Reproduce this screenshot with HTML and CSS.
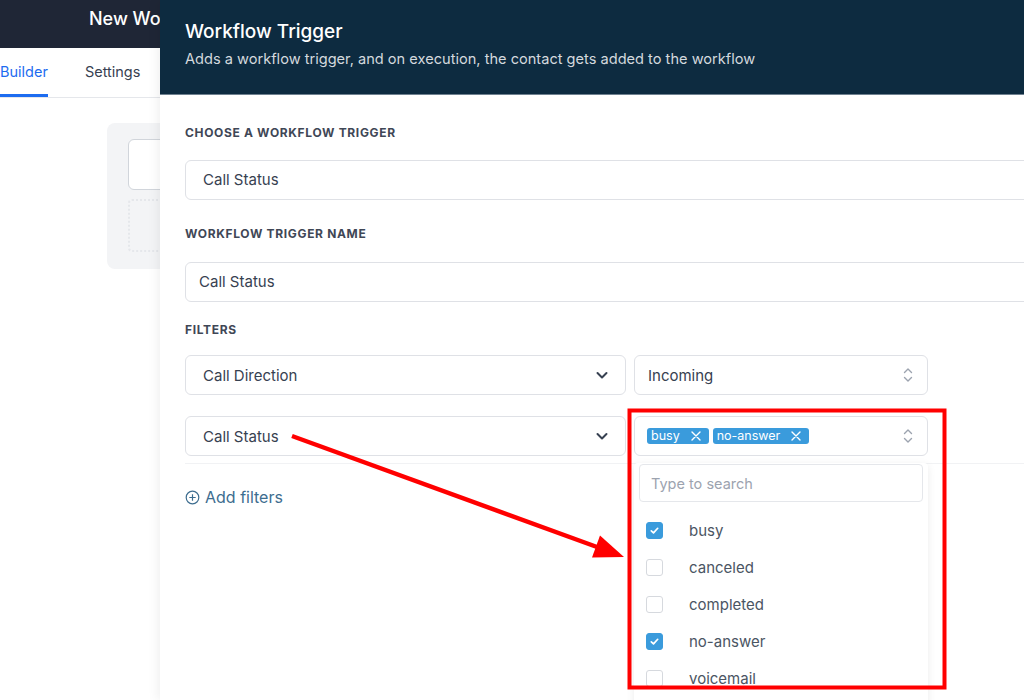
FILE: index.html
```html
<!DOCTYPE html>
<html>
<head>
<meta charset="utf-8">
<link rel="stylesheet" href="styles.css">
</head>
<body>
<div class="app">
  <div class="topbar"><div class="app-title-clip"><span class="app-title">New Workflow</span></div></div>
  <div class="tabs">
    <div class="tab active">Builder</div>
    <div class="tab">Settings</div>
  </div>
  <div class="canvas">
    <div class="canvas-card">
      <div class="node"></div>
      <div class="node-dashed"></div>
    </div>
  </div>
</div>

<div class="drawer">
  <div class="drawer-head">
    <div class="drawer-title">Workflow Trigger</div>
    <div class="drawer-sub">Adds a workflow trigger, and on execution, the contact gets added to the workflow</div>
  </div>
  <div class="drawer-body">
    <div class="label l1">CHOOSE A WORKFLOW TRIGGER</div>
    <div class="field select-field">Call Status</div>
    <div class="label l2">WORKFLOW TRIGGER NAME</div>
    <div class="field input-field">Call Status</div>
    <div class="label l3">FILTERS</div>
    <div class="filters">
      <div class="filter-row">
        <div class="sel sel-left"><span>Call Direction</span>
          <svg class="chev" width="14" height="14" viewBox="0 0 14 14"><path d="M2.5 5 L7 9.5 L11.5 5" fill="none" stroke="#374151" stroke-width="2" stroke-linecap="round" stroke-linejoin="round"/></svg>
        </div>
        <div class="sel sel-right"><span>Incoming</span>
          <svg class="updown" width="12" height="18" viewBox="0 0 12 18"><path d="M2.5 6.5 L6 3 L9.5 6.5 M2.5 11.5 L6 15 L9.5 11.5" fill="none" stroke="#9ca3af" stroke-width="1.4" stroke-linecap="round" stroke-linejoin="round"/></svg>
        </div>
      </div>
      <div class="filter-row">
        <div class="sel sel-left"><span>Call Status</span>
          <svg class="chev" width="14" height="14" viewBox="0 0 14 14"><path d="M2.5 5 L7 9.5 L11.5 5" fill="none" stroke="#374151" stroke-width="2" stroke-linecap="round" stroke-linejoin="round"/></svg>
        </div>
        <div class="multi-wrap">
          <div class="sel sel-right multi">
            <div class="tags">
              <span class="tag">busy<svg class="tag-x" width="10" height="10" viewBox="0 0 10 10"><path d="M1 1 L9 9 M9 1 L1 9" stroke="#fff" stroke-width="1.4" stroke-linecap="round"/></svg></span>
              <span class="tag">no-answer<svg class="tag-x" width="10" height="10" viewBox="0 0 10 10"><path d="M1 1 L9 9 M9 1 L1 9" stroke="#fff" stroke-width="1.4" stroke-linecap="round"/></svg></span>
            </div>
            <svg class="updown" width="12" height="18" viewBox="0 0 12 18"><path d="M2.5 6.5 L6 3 L9.5 6.5 M2.5 11.5 L6 15 L9.5 11.5" fill="none" stroke="#9ca3af" stroke-width="1.4" stroke-linecap="round" stroke-linejoin="round"/></svg>
          </div>
          <div class="dropdown">
            <div class="search">Type to search</div>
            <div class="opts">
              <div class="opt"><span class="cb on"><svg width="11" height="11" viewBox="0 0 11 11"><path d="M2.3 5.8 L4.5 7.9 L8.7 3.3" fill="none" stroke="#fff" stroke-width="1.7" stroke-linecap="round" stroke-linejoin="round"/></svg></span><span class="opt-label">busy</span></div>
              <div class="opt"><span class="cb"></span><span class="opt-label">canceled</span></div>
              <div class="opt"><span class="cb"></span><span class="opt-label">completed</span></div>
              <div class="opt"><span class="cb on"><svg width="11" height="11" viewBox="0 0 11 11"><path d="M2.3 5.8 L4.5 7.9 L8.7 3.3" fill="none" stroke="#fff" stroke-width="1.7" stroke-linecap="round" stroke-linejoin="round"/></svg></span><span class="opt-label">no-answer</span></div>
              <div class="opt"><span class="cb"></span><span class="opt-label">voicemail</span></div>
            </div>
          </div>
        </div>
      </div>
    </div>
    <div class="add-filters">
      <svg width="15" height="15" viewBox="0 0 15 15"><circle cx="7.5" cy="7.5" r="6.3" fill="none" stroke="#3d6d8f" stroke-width="1.2"/><path d="M7.5 4.3 V10.7 M4.3 7.5 H10.7" stroke="#3d6d8f" stroke-width="1.2"/></svg>
      <span>Add filters</span>
    </div>
  </div>
</div>

<svg class="annot" width="1024" height="700" viewBox="0 0 1024 700">
  <rect x="629.5" y="410.5" width="315" height="277" fill="none" stroke="#ff0000" stroke-width="4"/>
  <line x1="292" y1="436" x2="597" y2="547" stroke="#ff0000" stroke-width="4.5"/>
  <polygon points="624,557 592,557.5 600,535.5" fill="#ff0000"/>
</svg>
</body>
</html>
```

FILE: styles.css
```css
* { box-sizing: border-box; }
body {
  margin: 0;
  width: 1024px;
  height: 700px;
  overflow: hidden;
  position: relative;
  background: #ffffff;
  font-family: Inter, "Noto Sans", sans-serif;
  color: #374151;
}

/* background application */
.app { width: 1024px; height: 700px; }
.topbar {
  height: 48px;
  background: #1f2636;
  padding: 8px 0 0 89px;
}
.app-title-clip {
  width: 71px;
  overflow: hidden;
  white-space: nowrap;
  line-height: 22px;
}
.app-title { color: #ffffff; font-size: 18px; font-weight: 500; line-height: 22px; }
.tabs {
  height: 50px;
  display: flex;
  border-bottom: 1px solid #e5e7eb;
}
.tab {
  font-size: 14.5px;
  line-height: 48px;
  color: #374151;
  margin-left: 37px;
  border-bottom: 3px solid transparent;
}
.tab.active {
  margin-left: 0;
  color: #1d6cf0;
  border-bottom-color: #1d6cf0;
}
.canvas { padding: 25px 0 0 107px; }
.canvas-card {
  width: 200px;
  height: 146px;
  background: #f3f4f6;
  border-radius: 8px;
  padding: 16px 0 0 21px;
}
.node {
  width: 150px;
  height: 51px;
  background: #ffffff;
  border: 1px solid #d1d5db;
  border-radius: 6px;
}
.node-dashed {
  width: 150px;
  height: 53px;
  margin-top: 9px;
  border: 2px dotted #e5e7eb;
  border-radius: 4px;
}

/* drawer */
.drawer {
  position: absolute;
  left: 160px;
  top: 0;
  width: 900px;
  height: 700px;
  background: #ffffff;
  box-shadow: -3px 0 10px rgba(0, 0, 0, 0.06);
}
.drawer-head {
  height: 95px;
  background: #0d2b40;
  border-bottom: 1px solid #6f8190;
  padding: 20px 0 0 25px;
}
.drawer-title { color: #ffffff; font-size: 19px; font-weight: 500; line-height: 24px; }
.drawer-sub { color: #d4d9de; font-size: 14.6px; line-height: 20px; margin-top: 5px; }

.drawer-body { padding: 0 0 0 25px; }
.label {
  font-size: 12px;
  font-weight: 700;
  letter-spacing: 0.055em;
  color: #3f4756;
  line-height: 16px;
}
.l1 { margin-top: 30px; margin-bottom: 19px; }
.l2 { margin-top: 26px; margin-bottom: 20px; }
.l3 { margin-top: 20px; margin-bottom: 17px; }

.field {
  height: 40px;
  border: 1px solid #dfe1e6;
  border-radius: 6px;
  font-size: 15px;
  line-height: 38px;
  color: #374151;
}
.select-field { padding-left: 17px; }
.input-field { padding-left: 13px; }

.filters {
  border-bottom: 1px solid #f1f2f4;
  padding-bottom: 7px;
}
.filter-row {
  display: flex;
  gap: 8px;
  height: 40px;
}
.filter-row + .filter-row { margin-top: 21px; }
.sel {
  height: 40px;
  border: 1px solid #dfe1e6;
  border-radius: 6px;
  display: flex;
  align-items: center;
  justify-content: space-between;
  font-size: 15px;
  color: #374151;
  background: #ffffff;
}
.sel-left { width: 441px; padding: 0 16px 0 17px; }
.sel-right { width: 294px; padding: 0 13px 0 13px; }
.multi { padding-left: 12px; }
.chev { display: block; }
.updown { display: block; }

.multi-wrap { position: relative; width: 294px; }
.tags { display: flex; gap: 4px; }
.tag {
  display: inline-flex;
  align-items: center;
  height: 16px;
  padding: 0 8px 0 4px;
  background: #3a9bdc;
  border-radius: 3px;
  color: #ffffff;
  font-size: 12.5px;
  line-height: 16px;
}
.tag-x { margin-left: 11px; }

.dropdown {
  position: absolute;
  left: 0;
  top: 47px;
  width: 294px;
  height: 260px;
  background: #ffffff;
  box-shadow: 0 2px 8px rgba(0, 0, 0, 0.08);
  border-radius: 4px;
  padding: 1px 5px 0 5px;
}
.search {
  height: 38px;
  border: 1px solid #e5e7eb;
  border-radius: 4px;
  padding-left: 11px;
  line-height: 37px;
  font-size: 14.5px;
  color: #9ca3af;
}
.opts { padding-top: 10px; }
.opt {
  height: 37px;
  display: flex;
  align-items: center;
  padding-left: 7px;
}
.cb {
  width: 17px;
  height: 17px;
  border: 1px solid #d6d9de;
  border-radius: 3px;
  display: flex;
  align-items: center;
  justify-content: center;
  background: #ffffff;
}
.cb.on { background: #3a9bdc; border-color: #3a9bdc; }
.opt-label { margin-left: 26px; font-size: 15px; color: #4b5563; }

.add-filters {
  display: flex;
  align-items: center;
  gap: 5px;
  margin-top: 23px;
  color: #3d6d8f;
  font-size: 16px;
}

.annot {
  position: absolute;
  left: 0;
  top: 0;
  pointer-events: none;
}
```
